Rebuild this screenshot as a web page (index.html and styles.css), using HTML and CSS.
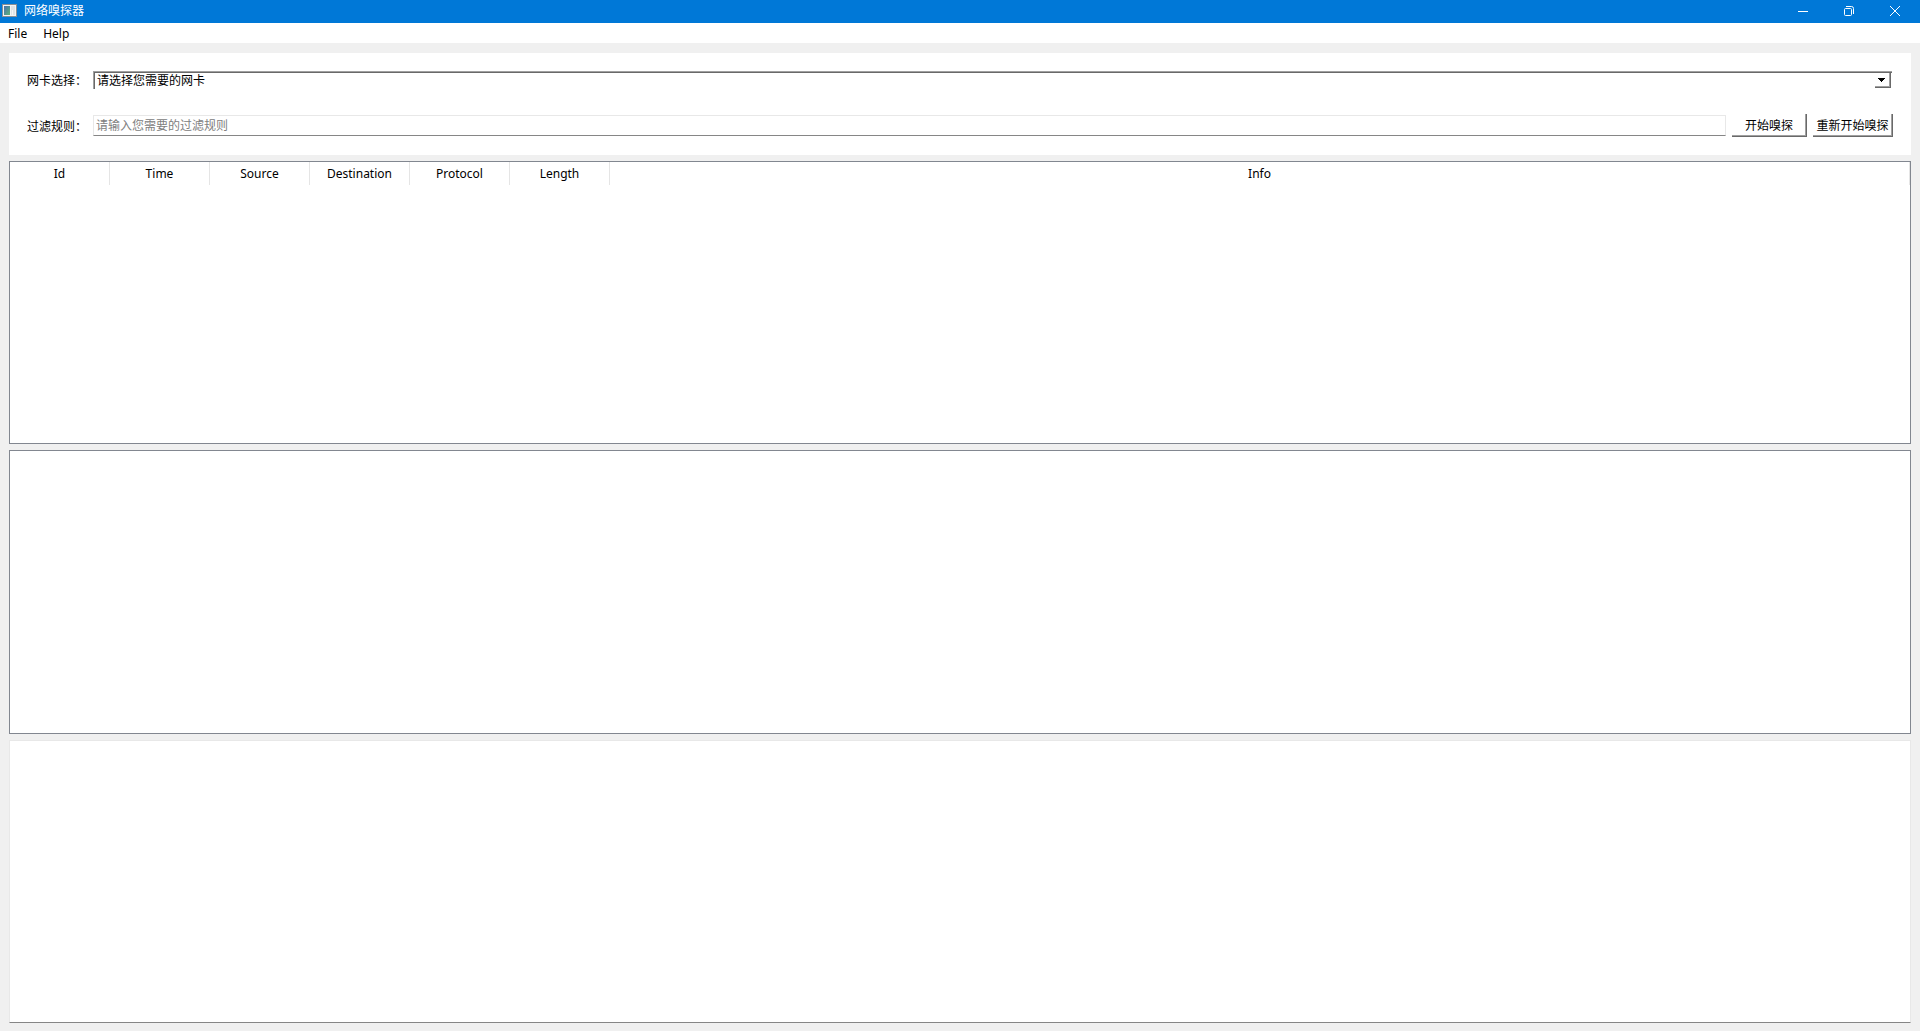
FILE: index.html
```html
<!DOCTYPE html>
<html lang="zh-CN">
<head>
<meta charset="utf-8">
<title>网络嗅探器</title>
<link rel="stylesheet" href="styles.css">
</head>
<body>
<div class="window">
  <header class="titlebar">
    <svg class="app-icon" width="15" height="13" viewBox="0 0 15 13" aria-hidden="true">
      <defs>
        <linearGradient id="pane" x1="0" y1="0" x2="1" y2="1">
          <stop offset="0" stop-color="#4a70b0"/>
          <stop offset="1" stop-color="#5cb478"/>
        </linearGradient>
      </defs>
      <rect x="0.5" y="0.5" width="14" height="12" fill="#f4f4f4" stroke="#8a8f94"/>
      <rect x="2" y="2" width="6" height="9" fill="url(#pane)"/>
      <rect x="9" y="2" width="4" height="9" fill="#dfe3e6"/>
      <rect x="10" y="6" width="1" height="5" fill="#f4f4f4"/>
    </svg>
    <h1 class="title">网络嗅探器</h1>
    <div class="window-controls">
      <button type="button" class="window-button" aria-label="最小化">
        <svg width="12" height="12" viewBox="0 0 12 12"><path d="M1 6.5H11"/></svg>
      </button>
      <button type="button" class="window-button" aria-label="还原">
        <svg width="12" height="12" viewBox="0 0 12 12"><rect x="1.5" y="3.5" width="7" height="7" rx="1"/><path d="M3 1.500H8.500Q10.500 1.500 10.500 3.500V9"/></svg>
      </button>
      <button type="button" class="window-button" aria-label="关闭">
        <svg width="12" height="12" viewBox="0 0 12 12"><path d="M1 1L11 11M11 1L1 11"/></svg>
      </button>
    </div>
  </header>
  <nav class="menubar">
    <button type="button" class="menu">File</button>
    <button type="button" class="menu">Help</button>
  </nav>
  <main class="content">
    <form class="panel">
      <div class="row">
        <label class="label" for="adapter">网卡选择：</label>
        <div class="combo">
          <select class="combo-select" id="adapter">
            <option>请选择您需要的网卡</option>
          </select>
          <span class="combo-arrow" aria-hidden="true"><svg width="7" height="4" viewBox="0 0 7 4"><path d="M0 0H7V1H6V2H5V3H4V4H3V3H2V2H1V1H0Z"/></svg></span>
        </div>
      </div>
      <div class="row">
        <label class="label" for="filter">过滤规则：</label>
        <input class="filter" id="filter" type="text" placeholder="请输入您需要的过滤规则">
        <button type="button" class="action start">开始嗅探</button>
        <button type="button" class="action restart">重新开始嗅探</button>
      </div>
    </form>
    <section class="view framed">
      <table class="packets">
        <thead>
          <tr>
            <th class="column">Id</th>
            <th class="column">Time</th>
            <th class="column">Source</th>
            <th class="column">Destination</th>
            <th class="column">Protocol</th>
            <th class="column">Length</th>
            <th class="column wide">Info</th>
          </tr>
        </thead>
        <tbody></tbody>
      </table>
    </section>
    <section class="view framed" aria-label="数据包详情"></section>
    <textarea class="view dump" aria-label="数据包内容" readonly></textarea>
  </main>
</div>
</body>
</html>
```
FILE: styles.css
```css
* {
  box-sizing: border-box;
}

body {
  margin: 0;
  background: #f0f0f0;
  color: #000;
  font: 12px/16px "Noto Sans", "Noto Sans CJK SC", sans-serif;
}

button,
input,
select,
textarea {
  margin: 0;
  padding: 0;
  border: 0;
  border-radius: 0;
  outline: 0;
  background: #fff;
  color: inherit;
  font: inherit;
}

.window {
  display: flex;
  flex-direction: column;
  min-height: 100vh;
}

.titlebar {
  display: flex;
  align-items: center;
  height: 23px;
  padding: 0 2px 2px;
  background: #0078d7;
  color: #fff;
}

.app-icon {
  margin-right: 7px;
}

.title {
  flex: 1;
  margin: 0;
  font-size: 12px;
  font-weight: 400;
}

.window-controls {
  display: flex;
}

.window-button {
  display: flex;
  align-items: center;
  justify-content: center;
  width: 46px;
  height: 20px;
  background: none;
}

.window-button svg {
  fill: none;
  stroke: #fff;
}

.menubar {
  display: flex;
  height: 20px;
  background: #fff;
}

.menu {
  padding: 2px 8px 0;
}

.content {
  flex: 1;
  display: grid;
  grid-template-rows: auto 1fr 1fr 1fr;
  gap: 6px;
  padding: 10px 9px 8px;
}

.panel {
  display: flex;
  flex-direction: column;
  gap: 25px;
  padding: 18px;
  background: #fff;
}

.row {
  display: flex;
  align-items: center;
  gap: 6px;
}

.label {
  width: 60px;
  padding-top: 2px;
  white-space: nowrap;
}

.combo {
  position: relative;
  flex: 1;
  height: 18px;
  margin-right: 1px;
  border-top: 1px solid #a0a0a0;
  border-left: 1px solid #a0a0a0;
}

.combo-select {
  display: block;
  width: 100%;
  height: 17px;
  padding-left: 2px;
  border-top: 1px solid #696969;
  border-left: 1px solid #696969;
  appearance: none;
}

.combo-arrow {
  position: absolute;
  top: 1px;
  right: 1px;
  display: flex;
  align-items: center;
  justify-content: center;
  width: 16px;
  height: 15px;
  padding-right: 2px;
  border-right: 1px solid #696969;
  border-bottom: 1px solid #696969;
  box-shadow: inset -1px -1px #a0a0a0;
  pointer-events: none;
}

.filter {
  flex: 1;
  height: 21px;
  padding-left: 2px;
  border: 1px solid #e8e8e8;
  border-bottom-color: #868686;
}

.filter::placeholder {
  color: #808080;
}

.action {
  height: 23px;
  padding-top: 2px;
  border-right: 1px solid #696969;
  border-bottom: 1px solid #696969;
  box-shadow: inset -1px -1px #a0a0a0;
  white-space: nowrap;
}

.start {
  width: 75px;
}

.restart {
  width: 80px;
}

.view {
  background: #fff;
}

.framed {
  border: 1px solid #828790;
}

.packets {
  width: 100%;
  border-collapse: separate;
  border-spacing: 0;
  table-layout: fixed;
}

.column {
  width: 100px;
  height: 23px;
  padding: 0;
  border-right: 1px solid #e5e5e5;
  font-weight: 400;
}

.wide {
  width: auto;
}

.dump {
  width: 100%;
  border: 1px solid #e8e8e8;
  border-bottom-color: #868686;
  resize: none;
}
```
